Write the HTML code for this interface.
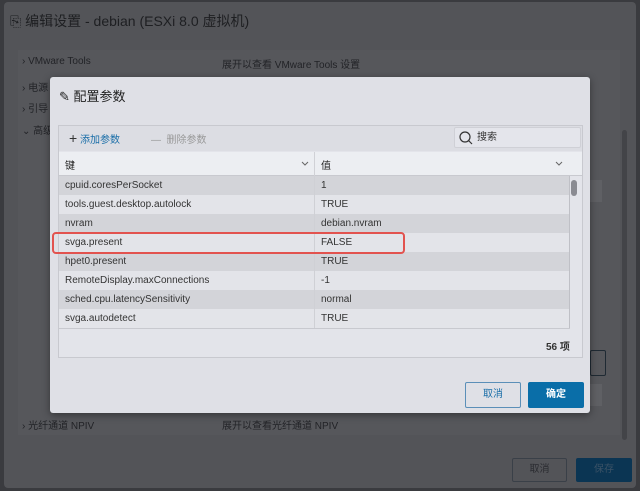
<!DOCTYPE html>
<html><head><meta charset="utf-8"><style>
*{box-sizing:border-box;margin:0;padding:0}
body{width:640px;height:491px;overflow:hidden;background:#3a3b3f;font-family:"Liberation Sans","Noto Sans CJK SC",sans-serif;position:relative}
.abs{position:absolute}
.outer{left:4px;top:2px;width:632px;height:486px;background:#535458;border-radius:4px}
.t{color:#222327;font-size:10px}
.modal{left:50px;top:77px;width:540px;height:336px;background:#dfe0e6;border-radius:3px;box-shadow:0 2px 8px rgba(0,0,0,.4)}
.grid{left:8px;top:48px;width:525px;height:233px;border:1px solid #c8c9cf;background:#e3e4ea}
.row{position:absolute;left:0;width:511px;height:19px;font-size:10px;color:#333;line-height:19px}
.row span{position:absolute;left:6px}
.row b{position:absolute;left:262px;font-weight:normal}
</style></head><body>
<div class="abs outer"></div>
<div class="abs" style="left:10px;top:11px;font-size:14px;color:#1e1f22">⎘ 编辑设置 - debian (ESXi 8.0 虚拟机)</div>
<div class="abs" style="left:18px;top:50px;width:602px;height:385px;background:#56575b"></div>
<div class="abs t" style="left:22px;top:56px">› VMware Tools</div>
<div class="abs t" style="left:222px;top:56px">展开以查看 VMware Tools 设置</div>
<div class="abs t" style="left:22px;top:79px">› 电源</div>
<div class="abs t" style="left:22px;top:100px">› 引导</div>
<div class="abs t" style="left:22px;top:122px">⌄ 高级</div>
<div class="abs t" style="left:22px;top:417px">› 光纤通道 NPIV</div>
<div class="abs t" style="left:222px;top:417px">展开以查看光纤通道 NPIV</div>
<div class="abs" style="left:590px;top:350px;width:16px;height:26px;border:1px solid #1f2a33;border-radius:2px"></div>
<div class="abs" style="left:590px;top:180px;width:12px;height:22px;background:#5f6064"></div>
<div class="abs" style="left:590px;top:384px;width:12px;height:22px;background:#5f6064"></div>
<div class="abs" style="left:622px;top:130px;width:5px;height:310px;background:#434448;border-radius:3px"></div>
<div class="abs" style="left:512px;top:458px;width:55px;height:24px;border:1px solid #3a4048;border-radius:2px;color:#2a2b30;font-size:10px;text-align:center;line-height:22px">取消</div>
<div class="abs" style="left:576px;top:458px;width:56px;height:24px;background:#0b3553;border-radius:2px;color:#3b5266;font-size:10px;text-align:center;line-height:24px">保存</div>

<div class="abs modal">
 <div class="abs" style="left:9px;top:9px;font-size:13px;color:#222">✎ 配置参数</div>
 <div class="abs grid">
  <div class="abs" style="left:0;top:0;width:523px;height:25px;background:#dcdde3"></div>
  <div class="abs" style="left:10px;top:3px;font-size:10px;color:#1a6ea8;line-height:18px"><span style="color:#333;font-size:14px">+</span> 添加参数</div>
  <div class="abs" style="left:92px;top:5px;font-size:10px;color:#999">—&nbsp; 删除参数</div>
  <div class="abs" style="left:395px;top:1px;width:127px;height:21px;border:1px solid #cfd0d6;border-radius:2px;background:#e4e5eb;font-size:10px;color:#333;line-height:19px;padding-left:22px">搜索</div>
  <svg class="abs" style="left:399px;top:4px" width="16" height="16"><circle cx="7" cy="7" r="5" fill="none" stroke="#333" stroke-width="1.2"/><path d="M10.5 10.5L14 14" stroke="#333" stroke-width="1.2"/></svg>
  <div class="abs" style="left:0;top:26px;width:523px;height:24px;background:#eceef2;border-bottom:1px solid #c8c9cf;font-size:10px;color:#222">
   <span class="abs" style="left:6px;top:5px">键</span>
   <svg class="abs" style="left:242px;top:9px" width="8" height="6"><path d="M1 1L4 4L7 1" fill="none" stroke="#666" stroke-width="1"/></svg>
   <span class="abs" style="left:255px;top:0;width:1px;height:24px;background:#d0d1d6"></span>
   <span class="abs" style="left:262px;top:5px">值</span>
   <svg class="abs" style="left:496px;top:9px" width="8" height="6"><path d="M1 1L4 4L7 1" fill="none" stroke="#666" stroke-width="1"/></svg>
  </div>
  <div class="row" style="top:50px;background:#d3d4d9"><span>cpuid.coresPerSocket</span><b>1</b></div>
  <div class="row" style="top:69px;background:#e3e4e9"><span>tools.guest.desktop.autolock</span><b>TRUE</b></div>
  <div class="row" style="top:88px;background:#d3d4d9"><span>nvram</span><b>debian.nvram</b></div>
  <div class="row" style="top:107px;background:#e3e4e9"><span>svga.present</span><b>FALSE</b></div>
  <div class="row" style="top:126px;background:#d3d4d9"><span>hpet0.present</span><b>TRUE</b></div>
  <div class="row" style="top:145px;background:#e3e4e9"><span>RemoteDisplay.maxConnections</span><b>-1</b></div>
  <div class="row" style="top:164px;background:#d3d4d9"><span>sched.cpu.latencySensitivity</span><b>normal</b></div>
  <div class="row" style="top:183px;background:#e3e4e9"><span>svga.autodetect</span><b>TRUE</b></div>
  <div class="abs" style="left:255px;top:50px;width:1px;height:152px;background:#cfd0d5"></div>
  <div class="abs" style="left:510px;top:50px;width:1px;height:152px;background:#bfc0c6"></div>
  <div class="abs" style="left:0;top:202px;width:511px;height:1px;background:#c8c9cf"></div>
  <div class="abs" style="left:512px;top:54px;width:6px;height:16px;background:#8a8b92;border-radius:3px"></div>
  <div class="abs" style="left:487px;top:212px;font-size:10px;font-weight:bold;color:#333">56 项</div>
 </div>
 <div class="abs" style="left:2px;top:155px;width:353px;height:22px;border:2px solid #e2534f;border-radius:4px"></div>
 <div class="abs" style="left:415px;top:305px;width:56px;height:26px;border:1px solid #5b8fb8;border-radius:2px;color:#1a6ea8;font-size:10px;text-align:center;line-height:24px">取消</div>
 <div class="abs" style="left:478px;top:305px;width:56px;height:26px;background:#0a6ea8;border-radius:2px;color:#fff;font-size:10px;font-weight:bold;text-align:center;line-height:26px">确定</div>
</div>
</body></html>
